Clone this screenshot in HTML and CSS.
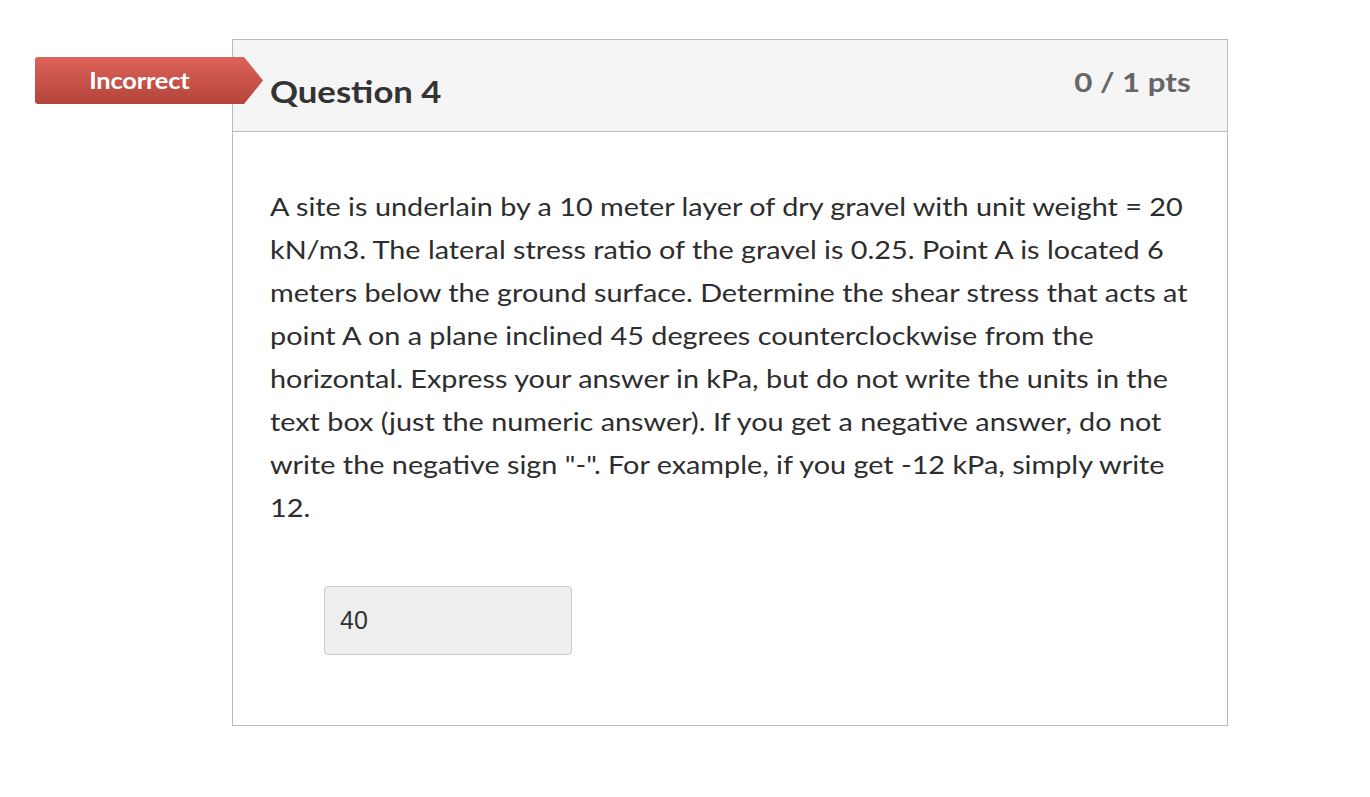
FILE: index.html
```html
<!DOCTYPE html>
<html>
<head>
<meta charset="utf-8">
<link rel="stylesheet" href="styles.css">
</head>
<body>
<div class="page">
  <div class="question">
    <div class="badge"><span class="wide badge-text">Incorrect</span></div>
    <div class="header">
      <h2 class="title"><span class="wide">Question 4</span></h2>
      <span class="pts wide-right">0 / 1 pts</span>
    </div>
    <div class="content">
      <p class="text">A site is underlain by a 10 meter layer of dry gravel with unit weight = 20 kN/m3. The lateral stress ratio of the gravel is 0.25. Point A is located 6 meters below the ground surface. Determine the shear stress that acts at point A on a plane inclined 45 degrees counterclockwise from the horizontal. Express your answer in kPa, but do not write the units in the text box (just the numeric answer). If you get a negative answer, do not write the negative sign "-". For example, if you get -12 kPa, simply write 12.</p>
      <div class="answer">40</div>
    </div>
  </div>
</div>
</body>
</html>
```

FILE: styles.css
```css
html, body {
  margin: 0;
  padding: 0;
  background: #fff;
  font-family: Lato, "Open Sans", sans-serif;
  color: #2d3b45;
}
.page {
  padding: 39px 0 0 232px;
}
.wide {
  display: inline-block;
  transform: scaleX(1.156);
  transform-origin: 0 50%;
}
.wide-right {
  display: inline-block;
  transform: scaleX(1.156);
  transform-origin: 100% 50%;
}
.question {
  position: relative;
  width: 994px;
  border: 1px solid #bbb;
}
.badge {
  position: absolute;
  left: -198px;
  top: 17px;
  width: 228px;
  height: 47px;
  box-sizing: border-box;
  padding-right: 19px;
  background: linear-gradient(#dd6359, #b3443b);
  color: #fff;
  font-weight: bold;
  font-size: 22px;
  line-height: 47px;
  text-align: center;
  border-radius: 3px;
  clip-path: polygon(0 0, 209px 0, 228px 50%, 209px 100%, 0 100%);
}
.badge-text {
  transform-origin: 50% 50%;
  letter-spacing: -0.2px;
}
.header {
  display: flex;
  justify-content: space-between;
  align-items: flex-start;
  background: #f5f5f5;
  border-bottom: 1px solid #bbb;
  height: 91px;
  padding: 0 36px 0 37px;
}
.title {
  margin: 33px 0 0;
  font-size: 30px;
  font-weight: bold;
  color: #333;
  line-height: 36px;
}
.pts {
  margin-top: 26px;
  font-size: 27px;
  font-weight: bold;
  color: #666;
  line-height: 32px;
}
.content {
  padding: 53px 37px 70px;
}
.text {
  margin: 0;
  width: 805px;
  font-size: 25px;
  line-height: 43px;
  color: #2d2d2d;
  transform: scaleX(1.152);
  transform-origin: 0 0;
}
.answer {
  margin: 57px 0 0 54px;
  width: 248px;
  height: 69px;
  box-sizing: border-box;
  border: 1px solid #ccc;
  border-radius: 4px;
  background: #efefef;
  font-family: "Liberation Sans", Arial, sans-serif;
  font-size: 25px;
  line-height: 67px;
  padding-left: 15px;
  color: #333;
}
```
